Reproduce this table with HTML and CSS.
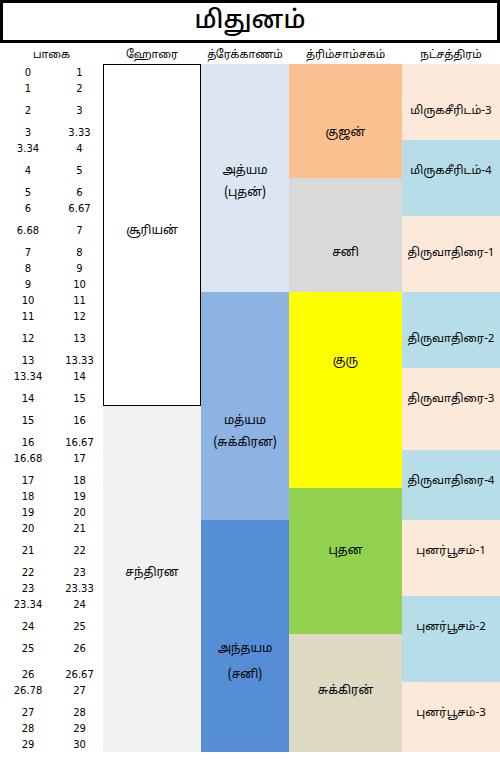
FILE: index.html
```html
<!DOCTYPE html>
<html lang="ta">
<head>
<meta charset="utf-8">
<title>மிதுனம்</title>
<link rel="stylesheet" href="styles.css">
</head>
<body>
<div class="page">
  <h1 class="title">மிதுனம்</h1>
  <div class="heads">
    <div class="h h-deg">பாகை</div>
    <div class="h">ஹோரை</div>
    <div class="h">த்ரேக்காணம்</div>
    <div class="h">த்ரிம்சாம்சகம்</div>
    <div class="h">நட்சத்திரம்</div>
  </div>
  <div class="table">
    <!-- degree rows -->
    <div class="n a r1">0</div><div class="n b r1">1</div>
    <div class="n a r2">1</div><div class="n b r2">2</div>
    <div class="n a r3">2</div><div class="n b r3">3</div>
    <div class="n a r4">3</div><div class="n b r4">3.33</div>
    <div class="n a r5">3.34</div><div class="n b r5">4</div>
    <div class="n a r6">4</div><div class="n b r6">5</div>
    <div class="n a r7">5</div><div class="n b r7">6</div>
    <div class="n a r8">6</div><div class="n b r8">6.67</div>
    <div class="n a r9">6.68</div><div class="n b r9">7</div>
    <div class="n a r10">7</div><div class="n b r10">8</div>
    <div class="n a r11">8</div><div class="n b r11">9</div>
    <div class="n a r12">9</div><div class="n b r12">10</div>
    <div class="n a r13">10</div><div class="n b r13">11</div>
    <div class="n a r14">11</div><div class="n b r14">12</div>
    <div class="n a r15">12</div><div class="n b r15">13</div>
    <div class="n a r16">13</div><div class="n b r16">13.33</div>
    <div class="n a r17">13.34</div><div class="n b r17">14</div>
    <div class="n a r18">14</div><div class="n b r18">15</div>
    <div class="n a r19">15</div><div class="n b r19">16</div>
    <div class="n a r20">16</div><div class="n b r20">16.67</div>
    <div class="n a r21">16.68</div><div class="n b r21">17</div>
    <div class="n a r22">17</div><div class="n b r22">18</div>
    <div class="n a r23">18</div><div class="n b r23">19</div>
    <div class="n a r24">19</div><div class="n b r24">20</div>
    <div class="n a r25">20</div><div class="n b r25">21</div>
    <div class="n a r26">21</div><div class="n b r26">22</div>
    <div class="n a r27">22</div><div class="n b r27">23</div>
    <div class="n a r28">23</div><div class="n b r28">23.33</div>
    <div class="n a r29">23.34</div><div class="n b r29">24</div>
    <div class="n a r30">24</div><div class="n b r30">25</div>
    <div class="n a r31">25</div><div class="n b r31">26</div>
    <div class="n a r32">26</div><div class="n b r32">26.67</div>
    <div class="n a r33">26.78</div><div class="n b r33">27</div>
    <div class="n a r34">27</div><div class="n b r34">28</div>
    <div class="n a r35">28</div><div class="n b r35">29</div>
    <div class="n a r36">29</div><div class="n b r36">30</div>

    <!-- hora -->
    <div class="blk hora sun"></div>
    <div class="blk hora moon"></div>
    <div class="t hora r9">சூரியன்</div>
    <div class="t hora r27">சந்திரன</div>

    <!-- drekkana -->
    <div class="blk drek d1"></div>
    <div class="blk drek d2"></div>
    <div class="blk drek d3"></div>
    <div class="t drek r6">அத்யம</div>
    <div class="t drek r7">(புதன்)</div>
    <div class="t drek r19">மத்யம</div>
    <div class="t drek r20">(சுக்கிரன)</div>
    <div class="t drek r31">அந்தயம</div>
    <div class="t drek r32">(சனி)</div>

    <!-- trimsamsa -->
    <div class="blk trim t1"></div>
    <div class="blk trim t2"></div>
    <div class="blk trim t3"></div>
    <div class="blk trim t4"></div>
    <div class="blk trim t5"></div>
    <div class="t trim r4">குஜன்</div>
    <div class="t trim r10">சனி</div>
    <div class="t trim r16">குரு</div>
    <div class="t trim r26">புதன</div>
    <div class="t trim r33">சுக்கிரன்</div>

    <!-- nakshatra -->
    <div class="blk nak k1 peach"></div>
    <div class="blk nak k2 blue"></div>
    <div class="blk nak k3 peach"></div>
    <div class="blk nak k4 blue"></div>
    <div class="blk nak k5 peach"></div>
    <div class="blk nak k6 blue"></div>
    <div class="blk nak k7 peach"></div>
    <div class="blk nak k8 blue"></div>
    <div class="blk nak k9 peach"></div>
    <div class="t nak r3">மிருகசீரிடம்-3</div>
    <div class="t nak r6">மிருகசீரிடம்-4</div>
    <div class="t nak r10">திருவாதிரை-1</div>
    <div class="t nak r15">திருவாதிரை-2</div>
    <div class="t nak r18">திருவாதிரை-3</div>
    <div class="t nak r22">திருவாதிரை-4</div>
    <div class="t nak r26">புனர்பூசம்-1</div>
    <div class="t nak r30">புனர்பூசம்-2</div>
    <div class="t nak r34">புனர்பூசம்-3</div>
  </div>
</div>
</body>
</html>
```

FILE: styles.css
```css
* { box-sizing: border-box; }
html, body { margin: 0; padding: 0; background: #ffffff; }
body {
  width: 500px;
  height: 763px;
  overflow: hidden;
  font-family: "Noto Sans Tamil", "Lohit Tamil", "Noto Sans", "DejaVu Sans", sans-serif;
  color: #000;
}
.title {
  margin: 0;
  height: 43px;
  border: 3px solid #000;
  font-size: 25px;
  font-weight: 500;
  line-height: 38px;
  text-align: center;
}
.heads {
  display: grid;
  grid-template-columns: 103px 98px 88px 113px 98px;
  height: 21px;
  align-items: center;
  font-size: 11px;
}
.h { text-align: center; line-height: 16px; padding-top: 2px; }

.table {
  display: grid;
  grid-template-columns: 56px 47px 98px 88px 113px 98px;
  grid-template-rows:
    16px 16px 22px 22px 16px 22px 22px 16px 22px 22px
    16px 16px 16px 16px 22px 22px 16px 22px 22px 22px
    16px 22px 16px 16px 16px 22px 22px 16px 16px 22px
    22px 26px 16px 22px 16px 16px;
}
.n {
  font-family: "DejaVu Sans", sans-serif;
  font-size: 10px;
  line-height: 14px;
  align-self: end;
  text-align: center;
  z-index: 1;
}
.a { grid-column: 1; }
.b { grid-column: 2; }

.r1 { grid-row: 1; } .r2 { grid-row: 2; } .r3 { grid-row: 3; } .r4 { grid-row: 4; }
.r5 { grid-row: 5; } .r6 { grid-row: 6; } .r7 { grid-row: 7; } .r8 { grid-row: 8; }
.r9 { grid-row: 9; } .r10 { grid-row: 10; } .r11 { grid-row: 11; } .r12 { grid-row: 12; }
.r13 { grid-row: 13; } .r14 { grid-row: 14; } .r15 { grid-row: 15; } .r16 { grid-row: 16; }
.r17 { grid-row: 17; } .r18 { grid-row: 18; } .r19 { grid-row: 19; } .r20 { grid-row: 20; }
.r21 { grid-row: 21; } .r22 { grid-row: 22; } .r23 { grid-row: 23; } .r24 { grid-row: 24; }
.r25 { grid-row: 25; } .r26 { grid-row: 26; } .r27 { grid-row: 27; } .r28 { grid-row: 28; }
.r29 { grid-row: 29; } .r30 { grid-row: 30; } .r31 { grid-row: 31; } .r32 { grid-row: 32; }
.r33 { grid-row: 33; } .r34 { grid-row: 34; } .r35 { grid-row: 35; } .r36 { grid-row: 36; }

.hora { grid-column: 3; }
.drek { grid-column: 4; }
.trim { grid-column: 5; }
.nak  { grid-column: 6; }

.sun { grid-row: 1 / 19; background: #fff; border: 1px solid #000; }
.moon { grid-row: 19 / 37; background: #f2f2f2; }

.d1 { grid-row: 1 / 13; background: #dce6f2; }
.d2 { grid-row: 13 / 25; background: #8db3e2; }
.d3 { grid-row: 25 / 37; background: #558ed5; }

.t1 { grid-row: 1 / 7; background: #fac090; }
.t2 { grid-row: 7 / 13; background: #d9d9d9; }
.t3 { grid-row: 13 / 23; background: #ffff00; }
.t4 { grid-row: 23 / 31; background: #92d050; }
.t5 { grid-row: 31 / 37; background: #ddd9c3; }

.k1 { grid-row: 1 / 5; }
.k2 { grid-row: 5 / 9; }
.k3 { grid-row: 9 / 13; }
.k4 { grid-row: 13 / 17; }
.k5 { grid-row: 17 / 21; }
.k6 { grid-row: 21 / 25; }
.k7 { grid-row: 25 / 29; }
.k8 { grid-row: 29 / 33; }
.k9 { grid-row: 33 / 37; }
.peach { background: #fde9d9; }
.blue { background: #b7dee8; }

.t {
  align-self: end;
  text-align: center;
  font-size: 12px;
  line-height: 16px;
  margin-bottom: -1px;
  white-space: nowrap;
  z-index: 1;
}
.t.nak { font-size: 11.5px; }
```
